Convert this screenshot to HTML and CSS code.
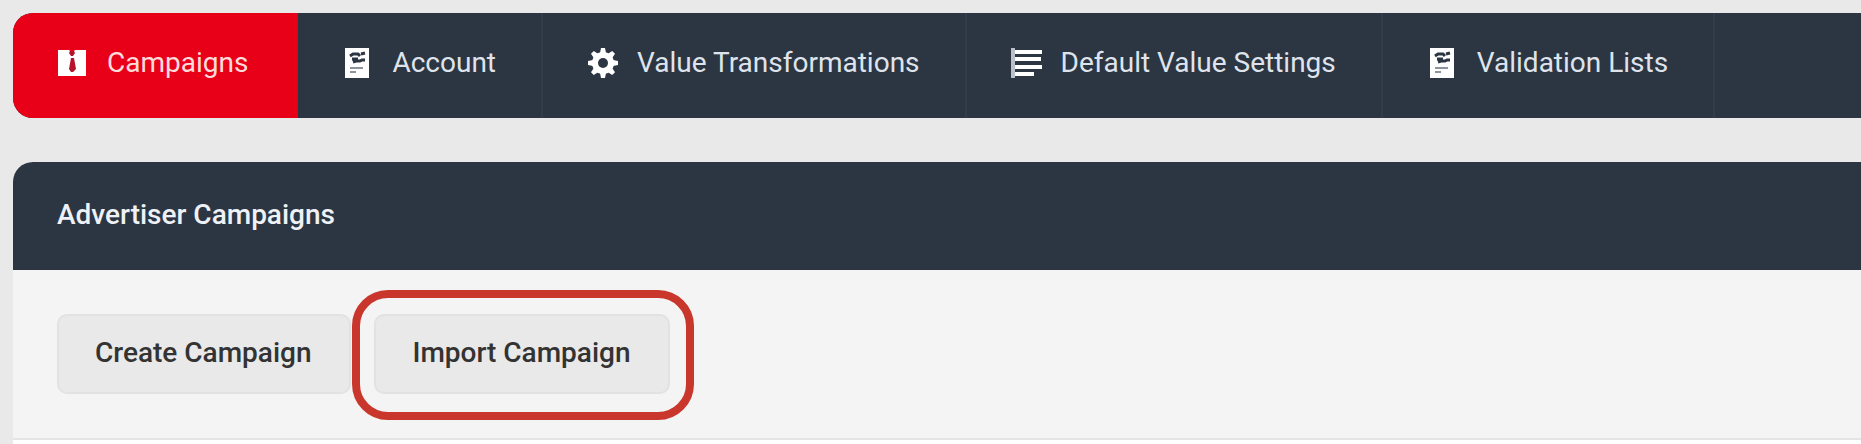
FILE: index.html
```html
<!DOCTYPE html>
<html lang="en">
<head>
<meta charset="utf-8">
<title>Advertiser Campaigns</title>
<link rel="stylesheet" href="styles.css">
</head>
<body>
<svg class="defs" aria-hidden="true">
  <symbol id="document" viewBox="0 0 32 32">
    <path fill="#fff" d="M3 1h24v30H3z"/>
    <path fill="none" stroke="#2c3542" stroke-width="3" d="M8 9l3-2h5l2 2M19 7l4-1M10 12h6M11 15l3-1h4l2-1h3"/>
    <path fill="none" stroke="#8d949d" stroke-width="2" d="M8 21h13M8 25h6"/>
  </symbol>
</svg>
<nav class="tabs" aria-label="Advertiser">
  <a class="tab tab-active" href="#campaigns" aria-current="page">
    <svg class="icon" viewBox="0 0 32 32" aria-hidden="true">
      <path fill="#fff" d="M1 3h11l3 3 3-3h11v26H1z"/>
      <path fill="#b5122b" d="M13 4h4l1 2-2 3h-2l-2-3zM14 11h3l2 11-3 3h-2l-2-3z"/>
    </svg>
    <span>Campaigns</span>
  </a>
  <a class="tab" href="#account">
    <svg class="icon" aria-hidden="true"><use href="#document"/></svg>
    <span>Account</span>
  </a>
  <a class="tab" href="#transformations">
    <svg class="icon" viewBox="0 0 32 32" aria-hidden="true">
      <g fill="#fff">
        <path id="teeth" d="M13 6l1-5h4l1 5v20l-1 5h-4l-1-5z"/>
        <use href="#teeth" transform="rotate(45 16 16)"/>
        <use href="#teeth" transform="rotate(90 16 16)"/>
        <use href="#teeth" transform="rotate(135 16 16)"/>
        <circle cx="16" cy="16" r="11"/>
      </g>
      <circle cx="16" cy="16" r="5" fill="#2c3542"/>
    </svg>
    <span>Value Transformations</span>
  </a>
  <a class="tab" href="#defaults">
    <svg class="icon" viewBox="0 0 32 32" aria-hidden="true">
      <path fill="#b9c0ca" d="M0 1h4v30H0z"/>
      <path fill="#fff" d="M4 3h27v4H4zM4 10h26v4H4zM4 18h27v4H4zM4 25h19v4H4z"/>
    </svg>
    <span>Default Value Settings</span>
  </a>
  <a class="tab" href="#validation">
    <svg class="icon" aria-hidden="true"><use href="#document"/></svg>
    <span>Validation Lists</span>
  </a>
</nav>
<main class="panel">
  <h1 class="panel-title">Advertiser Campaigns</h1>
  <div class="toolbar">
    <button class="button" type="button">Create Campaign</button>
    <div class="highlight">
      <button class="button" type="button">Import Campaign</button>
    </div>
  </div>
</main>
</body>
</html>
```
FILE: styles.css
```css
* {
  box-sizing: border-box;
}

body {
  margin: 0;
  padding: 13px 0 0 13px;
  min-height: 100vh;
  display: flex;
  flex-direction: column;
  gap: 44px;
  background: #e9e9e9;
  font-family: Roboto, "Liberation Sans", sans-serif;
  font-size: 28px;
  line-height: 32px;
}

.defs {
  position: absolute;
  width: 0;
  height: 0;
}

.tabs {
  display: flex;
  background: #2c3542;
  border-radius: 20px 0 0 20px;
  overflow: hidden;
}

.tab {
  display: flex;
  align-items: center;
  gap: 18px;
  padding: 34px 45px 39px 44px;
  border-right: 2px solid #323c4b;
  color: #dfe4ec;
  text-decoration: none;
  white-space: nowrap;
}

.tab-active {
  padding-right: 48px;
  background: #e80019;
  border-right-color: #e80019;
  color: #ffdcdc;
}

.icon {
  flex: none;
  width: 32px;
  height: 32px;
}

.panel {
  flex: 1;
  background: #fff;
  border-top-left-radius: 20px;
  overflow: hidden;
}

.panel-title {
  margin: 0;
  padding: 37px 44px 39px;
  background: #2c3542;
  color: #eef1f6;
  font-size: 28px;
  font-weight: 500;
}

.toolbar {
  display: flex;
  gap: 23px;
  padding: 44px;
  background: #f4f4f4;
  border-bottom: 2px solid #e4e4e4;
}

.button {
  padding: 21px 38px 23px 36px;
  border: 2px solid #e2e2e2;
  border-radius: 10px;
  background: #e9e9e9;
  color: #333;
  font: inherit;
  font-weight: 500;
}

.highlight {
  position: relative;
}

.highlight::after {
  content: "";
  position: absolute;
  inset: -24px -24px -26px -22px;
  border: 8px solid #c9362c;
  border-radius: 36px;
  pointer-events: none;
}
```
